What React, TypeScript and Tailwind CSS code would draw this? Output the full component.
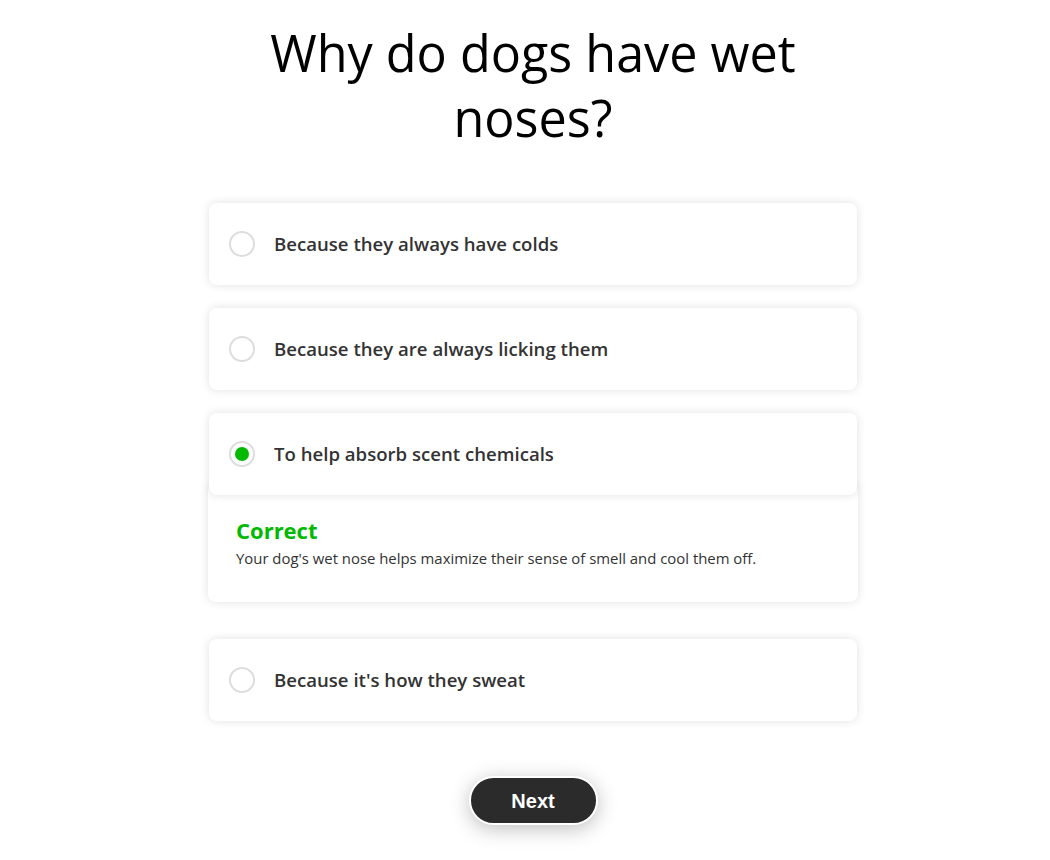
const OPTIONS = [
  "Because they always have colds",
  "Because they are always licking them",
  "To help absorb scent chemicals",
  "Because it's how they sweat",
];

const SELECTED = 2;

const Radio = ({ checked }: { checked: boolean }) => (
  <span className="flex items-center justify-center w-[26px] h-[26px] rounded-full border-2 border-[#dddddd] bg-white shrink-0">
    {checked && <span className="w-[14px] h-[14px] rounded-full bg-[#00b900]" />}
  </span>
);

const Option = ({ label, checked }: { label: string; checked: boolean }) => (
  <div className="relative z-10 flex items-center gap-[19px] h-[82px] px-5 bg-white rounded-lg shadow-[0_0_10px_rgba(0,0,0,0.12)]">
    <Radio checked={checked} />
    <span className="text-[18.6px] font-semibold text-[#333333]">{label}</span>
  </div>
);

export default function App() {
  return (
    <div
      className="min-h-[860px] bg-white pl-4 flex flex-col items-center"
      style={{ fontFamily: '"Open Sans", "Noto Sans", sans-serif' }}
    >
      <h1 className="mt-[20px] w-[620px] text-center text-[50.3px] leading-[65px] font-normal text-black">
        Why do dogs have wet noses?
      </h1>

      <div className="mt-[53px] w-[648px] flex flex-col">
        {OPTIONS.map((label, i) => (
          <div key={label} className={i === SELECTED + 1 ? "mt-[37px]" : i > 0 ? "mt-[23px]" : ""}>
            <Option label={label} checked={i === SELECTED} />
            {i === SELECTED && (
              <div className="-mx-px -mt-[12px] pt-[34px] pb-[34px] px-7 bg-white rounded-lg shadow-[0_0_10px_rgba(0,0,0,0.12)]">
                <div className="text-[22px] leading-[26px] font-bold text-[#00b900]">Correct</div>
                <p className="mt-[5px] text-[14.9px] leading-[20px] text-[#333333]">
                  Your dog's wet nose helps maximize their sense of smell and cool them off.
                </p>
              </div>
            )}
          </div>
        ))}
      </div>

      <button
        className="mt-[55px] w-[129px] h-[49px] rounded-full bg-[#2b2b2b] border-2 border-white text-white text-[20px] font-bold shadow-[0_4px_20px_rgba(0,0,0,0.25)]"
        style={{ fontFamily: '"Liberation Sans", Arial, sans-serif' }}
      >
        Next
      </button>
    </div>
  );
}
